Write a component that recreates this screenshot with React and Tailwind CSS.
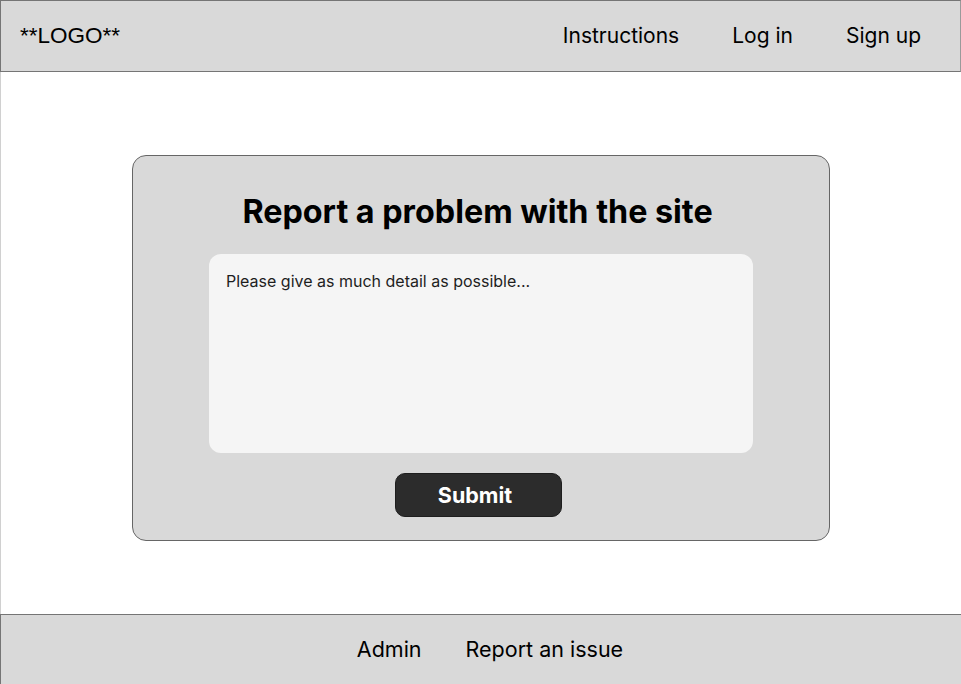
import React from 'react';

const App = () => {
  return (
    <div className="w-[961px] h-[684px] flex flex-col bg-white font-['Inter',sans-serif] text-black">
      {/* Header */}
      <header className="h-[72px] shrink-0 flex items-center justify-between bg-[#d9d9d9] border border-[#757575] border-r-[#9a9a9a] pl-[19px] pr-[39px]">
        <div className="text-[22.5px] font-['Liberation_Sans',Arial,sans-serif]">**LOGO**</div>
        <nav className="flex items-center gap-[53px] text-[21px]">
          <span>Instructions</span>
          <span>Log in</span>
          <span>Sign up</span>
        </nav>
      </header>

      {/* Main */}
      <main className="flex-1 flex items-start justify-center border-l border-[#d0d0d0] pt-[83px]">
        <div className="w-[698px] h-[386px] bg-[#d9d9d9] border border-[#666] rounded-[14px] flex flex-col items-center pt-[36px]">
          <h1 className="ml-[-7px] text-[32.3px] leading-[40px] font-bold">Report a problem with the site</h1>
          <textarea
            className="mt-[22px] w-[544px] h-[199px] bg-[#f5f5f5] rounded-[12px] px-[17px] py-[17px] text-[16px] leading-[20px] resize-none outline-none placeholder:text-[#1e1e1e]"
            placeholder="Please give as much detail as possible..."
          />
          <button className="mt-[20px] ml-[-5px] w-[167px] h-[44px] pr-[7px] bg-[#2c2c2c] border border-[#1e1e1e] rounded-[10px] text-white text-[21.5px] font-bold">
            Submit
          </button>
        </div>
      </main>

      {/* Footer */}
      <footer className="h-[70px] shrink-0 flex items-center justify-center gap-[44px] bg-[#d9d9d9] border-t border-l border-[#757575] pl-[18px] text-[21.5px]">
        <span>Admin</span>
        <span>Report an issue</span>
      </footer>
    </div>
  );
};

export default App;
